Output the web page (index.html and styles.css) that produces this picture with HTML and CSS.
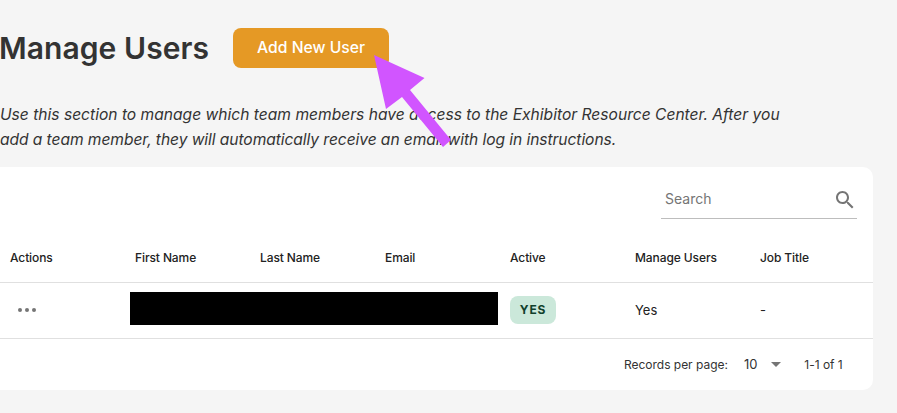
FILE: index.html
```html
<!DOCTYPE html>
<html lang="en">
<head>
<meta charset="utf-8">
<title>Manage Users</title>
<link rel="stylesheet" href="styles.css">
</head>
<body>
<main class="page">
  <header class="title-row">
    <h1 class="title">Manage Users</h1>
    <button class="add-btn">Add New User</button>
  </header>
  <p class="intro">Use this section to manage which team members have access to the Exhibitor Resource Center. After you<br><span class="intro-tight">add a team member, they will automatically receive an email with log in instructions.</span></p>
  <section class="card">
    <div class="toolbar">
      <div class="search">
        <span class="search-label">Search</span>
        <svg class="search-icon" width="24" height="24" viewBox="0 0 24 24"><path fill="#757575" d="M15.5 14h-.79l-.28-.27C15.41 12.59 16 11.11 16 9.5 16 5.91 13.09 3 9.5 3S3 5.91 3 9.5 5.91 16 9.5 16c1.61 0 3.09-.59 4.23-1.57l.27.28v.79l5 4.99L20.49 19l-4.99-5zm-6 0C7.01 14 5 11.99 5 9.5S7.01 5 9.5 5 14 7.01 14 9.5 11.99 14 9.5 14z"/></svg>
      </div>
    </div>
    <div class="row head">
      <div class="cell">Actions</div>
      <div class="cell">First Name</div>
      <div class="cell">Last Name</div>
      <div class="cell">Email</div>
      <div class="cell">Active</div>
      <div class="cell">Manage Users</div>
      <div class="cell">Job Title</div>
    </div>
    <div class="row body">
      <div class="cell dots"><span></span><span></span><span></span></div>
      <div class="redacted"></div>
      <div class="cell"><span class="badge">YES</span></div>
      <div class="cell">Yes</div>
      <div class="cell">-</div>
    </div>
    <footer class="pager">
      <span class="pager-label">Records per page:</span>
      <span class="pager-size">10</span>
      <svg class="pager-caret" width="10" height="5" viewBox="0 0 10 5"><path fill="#757575" d="M0 0h10L5 5z"/></svg>
      <span class="pager-range">1-1 of 1</span>
    </footer>
  </section>
</main>
<svg class="arrow" width="897" height="413" viewBox="0 0 897 413"><polygon fill="#d155ff" points="374,55 424.5,78 410,90 451,140 443,147 402,97 386,109"/></svg>
</body>
</html>
```
FILE: styles.css
```css
* { box-sizing: border-box; }
html, body { margin: 0; height: 100%; }
body {
  background: #f5f5f5;
  font-family: Inter, "Liberation Sans", sans-serif;
  color: #333;
  overflow: hidden;
  position: relative;
}
.page { width: 873px; padding-top: 28px; }
.title-row { display: flex; align-items: center; height: 40px; gap: 24px; }
.title { margin: 0 0 0 -1px; font-size: 30px; line-height: 40px; font-weight: 600; color: #333; letter-spacing: 0.07px; }
.add-btn {
  width: 156px;
  height: 40px;
  border: 0;
  border-radius: 8px;
  background: #e59925;
  color: #fff;
  font: 500 15.7px/40px Inter, "Liberation Sans", sans-serif;
  padding: 0;
}
.intro {
  margin: 34px 0 0;
  font-size: 15.6px;
  line-height: 25px;
  font-style: italic;
  color: #333;
}
.intro-tight { letter-spacing: -0.07px; }
.card {
  margin-top: 15px;
  height: 223px;
  background: #fff;
  border-radius: 0 10px 10px 0;
}
.toolbar { display: flex; justify-content: flex-end; padding: 16px 16px 0 0; height: 66px; }
.search {
  width: 196px;
  height: 36px;
  border-bottom: 1px solid #bdbdbd;
  display: flex;
  align-items: center;
  justify-content: space-between;
  padding: 0 0 2px 4px;
}
.search-label { font-size: 14px; letter-spacing: 0.03px; color: #757575; margin-bottom: 2px; }
.search-icon { display: block; }
.row { display: grid; grid-template-columns: repeat(6, 125px) 1fr; align-items: center; border-bottom: 1px solid #e0e0e0; }
.head { height: 50px; font-size: 12px; font-weight: 500; letter-spacing: -0.1px; color: #222; }
.body { height: 56px; padding-bottom: 2px; font-size: 13px; color: #222; }
.cell { padding-left: 10px; }
.dots { display: flex; gap: 3px; padding-left: 18px; }
.dots span { width: 4px; height: 4px; border-radius: 50%; background: #757575; }
.redacted { grid-column: span 3; height: 33px; margin: 0 2px 2px 5px; background: #000; }
.badge {
  display: block;
  width: 46px;
  height: 28px;
  border-radius: 8px;
  background: #cbe8da;
  color: #12402c;
  font-size: 12px;
  font-weight: 700;
  line-height: 28px;
  letter-spacing: 0.8px;
  text-align: center;
}
.pager { display: flex; align-items: center; height: 52px; padding: 0 0 2px 624px; font-size: 12px; letter-spacing: -0.02px; color: #333; }
.pager-size { margin-left: 16px; font-size: 13px; }
.pager-caret { margin-left: 14px; }
.pager-range { margin-left: 23px; }
.arrow { position: absolute; left: 0; top: 0; pointer-events: none; }
```
